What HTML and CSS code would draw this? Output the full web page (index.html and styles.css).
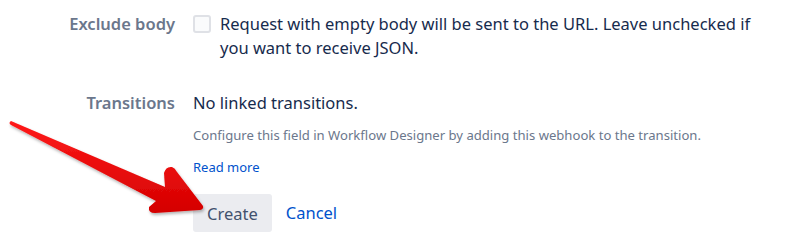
FILE: index.html
```html
<!DOCTYPE html>
<html>
<head>
<meta charset="utf-8">
<link rel="stylesheet" href="styles.css">
</head>
<body>
<form class="form">
  <div class="row">
    <div class="label">Exclude body</div>
    <div class="field check-field">
      <span class="checkbox"></span>
      <span class="check-text">Request with empty body will be sent to the URL. Leave unchecked if you want to receive JSON.</span>
    </div>
  </div>
  <div class="row row-transitions">
    <div class="label">Transitions</div>
    <div class="field">
      <div class="value">No linked transitions.</div>
      <div class="hint">Configure this field in Workflow Designer by adding this webhook to the transition.</div>
      <a class="link read-more" href="#">Read more</a>
    </div>
  </div>
  <div class="row row-buttons">
    <div class="label"></div>
    <div class="field buttons">
      <button type="button" class="btn">Create</button>
      <a class="link cancel" href="#">Cancel</a>
    </div>
  </div>
</form>
<svg class="arrow" width="790" height="240" viewBox="0 0 790 240">
  <defs>
    <linearGradient id="red" x1="0" y1="0" x2="0" y2="1">
      <stop offset="0" stop-color="#ff1a1a"/>
      <stop offset="1" stop-color="#d40000"/>
    </linearGradient>
    <filter id="sh" x="-10%" y="-10%" width="130%" height="140%">
      <feDropShadow dx="1" dy="2" stdDeviation="1.5" flood-color="#000" flood-opacity="0.3"/>
    </filter>
  </defs>
  <path filter="url(#sh)" fill="url(#red)" d="M11,121 L165,187 L164,173 Q166,166 172,167 Q175,168 177,172 L203,206 Q204,209 200,210 L155,213 Q148,213 149,207 L156,201 L11,125 Q8,123 11,121 Z"/>
</svg>
</body>
</html>
```
FILE: styles.css
```css
html, body {
  margin: 0;
  padding: 0;
  background: #fff;
}
body {
  font-family: "Noto Sans", "Open Sans", sans-serif;
  font-size: 16.5px;
  color: #172b4d;
  width: 790px;
  height: 240px;
  overflow: hidden;
  position: relative;
}
.form {
  padding-top: 12px;
}
.row {
  display: grid;
  grid-template-columns: 175px 1fr;
  column-gap: 18px;
  line-height: 24px;
}
.label {
  text-align: right;
  color: #6b778c;
  font-weight: 600;
}
.check-field {
  display: flex;
  align-items: flex-start;
  gap: 9px;
}
.checkbox {
  flex: none;
  width: 14px;
  height: 14px;
  margin-top: 3px;
  border: 2px solid #dfe1e6;
  border-radius: 3px;
  background: #fafbfc;
}
.check-text {
  width: 555px;
}
.row-transitions {
  margin-top: 31px;
}
.hint {
  margin-top: 12px;
  font-size: 13.1px;
  line-height: 16px;
  color: #6b778c;
}
.link {
  color: #0052cc;
  text-decoration: none;
}
.read-more {
  display: inline-block;
  margin-top: 16px;
  font-size: 13px;
  line-height: 16px;
}
.row-buttons {
  margin-top: 16px;
}
.buttons {
  display: flex;
  align-items: center;
  gap: 14px;
}
.btn {
  font-family: inherit;
  font-size: 16.5px;
  color: #42526e;
  background: #ebecf0;
  border: none;
  border-radius: 3px;
  height: 38px;
  padding: 0 14px;
}
.cancel {
  font-size: 16.5px;
}
.arrow {
  position: absolute;
  left: 0;
  top: 0;
  pointer-events: none;
}
```
